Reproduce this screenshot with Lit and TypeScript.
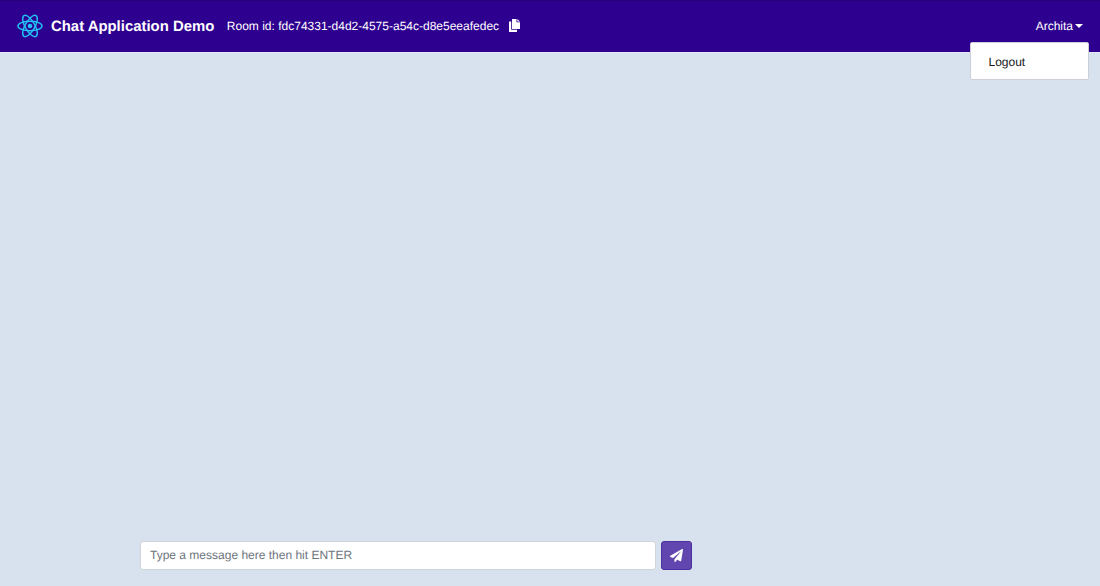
import { LitElement, html, css, svg } from "lit";
import { customElement } from "lit/decorators.js";

@customElement("app-root")
export class AppRoot extends LitElement {
  static styles = css`
    :host {
      display: block;
      width: 100%;
      height: 586px;
      font-family: "Liberation Sans", Arial, sans-serif;
      font-size: 12px;
      text-rendering: geometricPrecision;
      background: #d8e2ee;
    }
    .page {
      height: 586px;
      display: flex;
      flex-direction: column;
      position: relative;
      overflow: hidden;
    }
    .nav {
      height: 53px;
      box-sizing: border-box;
      flex: none;
      background: #2e0090;
      border-top: 1px solid #27007c;
      border-bottom: 1px solid #e6e6f2;
      display: flex;
      align-items: center;
      padding: 0 17px 1px;
      color: #fff;
    }
    .logo {
      width: 26px;
      height: 26px;
      margin-right: 8px;
      flex: none;
    }
    .brand {
      font-size: 14.9px;
      font-weight: 700;
      margin-right: 12.6px;
      padding-top: 2px;
      white-space: nowrap;
    }
    .room {
      white-space: nowrap;
    }
    .copy {
      width: 11px;
      height: 13px;
      margin: 0 0 2px 9.5px;
      flex: none;
    }
    .spacer {
      flex: 1;
    }
    .user {
      display: flex;
      align-items: center;
      white-space: nowrap;
    }
    .caret {
      margin-left: 2px;
      width: 0;
      height: 0;
      border-left: 4px solid transparent;
      border-right: 4px solid transparent;
      border-top: 4px solid #fff;
    }
    .menu {
      position: absolute;
      top: 42px;
      right: 11px;
      width: 119px;
      height: 38px;
      box-sizing: border-box;
      background: #fff;
      border: 1px solid #ccd0d6;
      border-radius: 2px;
      padding: 1px 0 0 17.5px;
      display: flex;
      align-items: center;
      color: #16181b;
    }
    .main {
      flex: 1;
    }
    .composer {
      flex: none;
      display: flex;
      align-items: center;
      gap: 5px;
      padding: 0 0 16px 140px;
    }
    .input {
      width: 516px;
      height: 29px;
      box-sizing: border-box;
      background: #fff;
      border: 1px solid #ced4da;
      border-radius: 3px;
      padding: 0 9px 1px;
      display: flex;
      align-items: center;
      color: #6c757d;
    }
    .send {
      width: 31px;
      height: 29px;
      box-sizing: border-box;
      background: #6246b0;
      border: 1px solid #4a30a0;
      border-radius: 3px;
      display: flex;
      align-items: center;
      justify-content: center;
    }
    .send svg {
      width: 13px;
      height: 13px;
    }
  `;

  private atom() {
    return svg`<svg class="logo" viewBox="0 0 26 26" fill="none" stroke="#22c3f5" stroke-width="1.4">
      <ellipse cx="13" cy="13" rx="12" ry="4.8"/>
      <ellipse cx="13" cy="13" rx="12" ry="4.8" transform="rotate(60 13 13)"/>
      <ellipse cx="13" cy="13" rx="12" ry="4.8" transform="rotate(120 13 13)"/>
      <circle cx="13" cy="13" r="2.3" fill="#22c3f5" stroke="none"/>
    </svg>`;
  }

  render() {
    return html`
      <div class="page">
        <div class="nav">
          ${this.atom()}
          <span class="brand">Chat Application Demo</span>
          <span class="room">Room id: fdc74331-d4d2-4575-a54c-d8e5eeafedec</span>
          <svg class="copy" viewBox="0 0 11 13" fill="#fff">
            <path d="M3 0h4.5v3.2H11V10H3z"/>
            <path d="M8.3 0 11 2.5H8.3z"/>
            <path d="M0 2.5h2.2V10.8H8V13H0z"/>
          </svg>
          <span class="spacer"></span>
          <span class="user">Archita<span class="caret"></span></span>
        </div>
        <div class="menu">Logout</div>
        <div class="main"></div>
        <div class="composer">
          <div class="input">Type a message here then hit ENTER</div>
          <div class="send">
            <svg viewBox="0 0 512 512" fill="#fff">
              <path d="M476 3.2 12.5 270.6c-18.1 10.4-15.8 35.6 2.2 43.2L121 358.4l287.3-253.2c5.5-4.9 13.3 2.6 8.6 8.3L176 407v80.5c0 23.6 28.5 32.9 42.5 15.8L282 426l124.6 52.2c14.2 6 30.4-2.9 33-18.2l72-432C515 7.8 493.3-6.8 476 3.2z"/>
            </svg>
          </div>
        </div>
      </div>
    `;
  }
}
